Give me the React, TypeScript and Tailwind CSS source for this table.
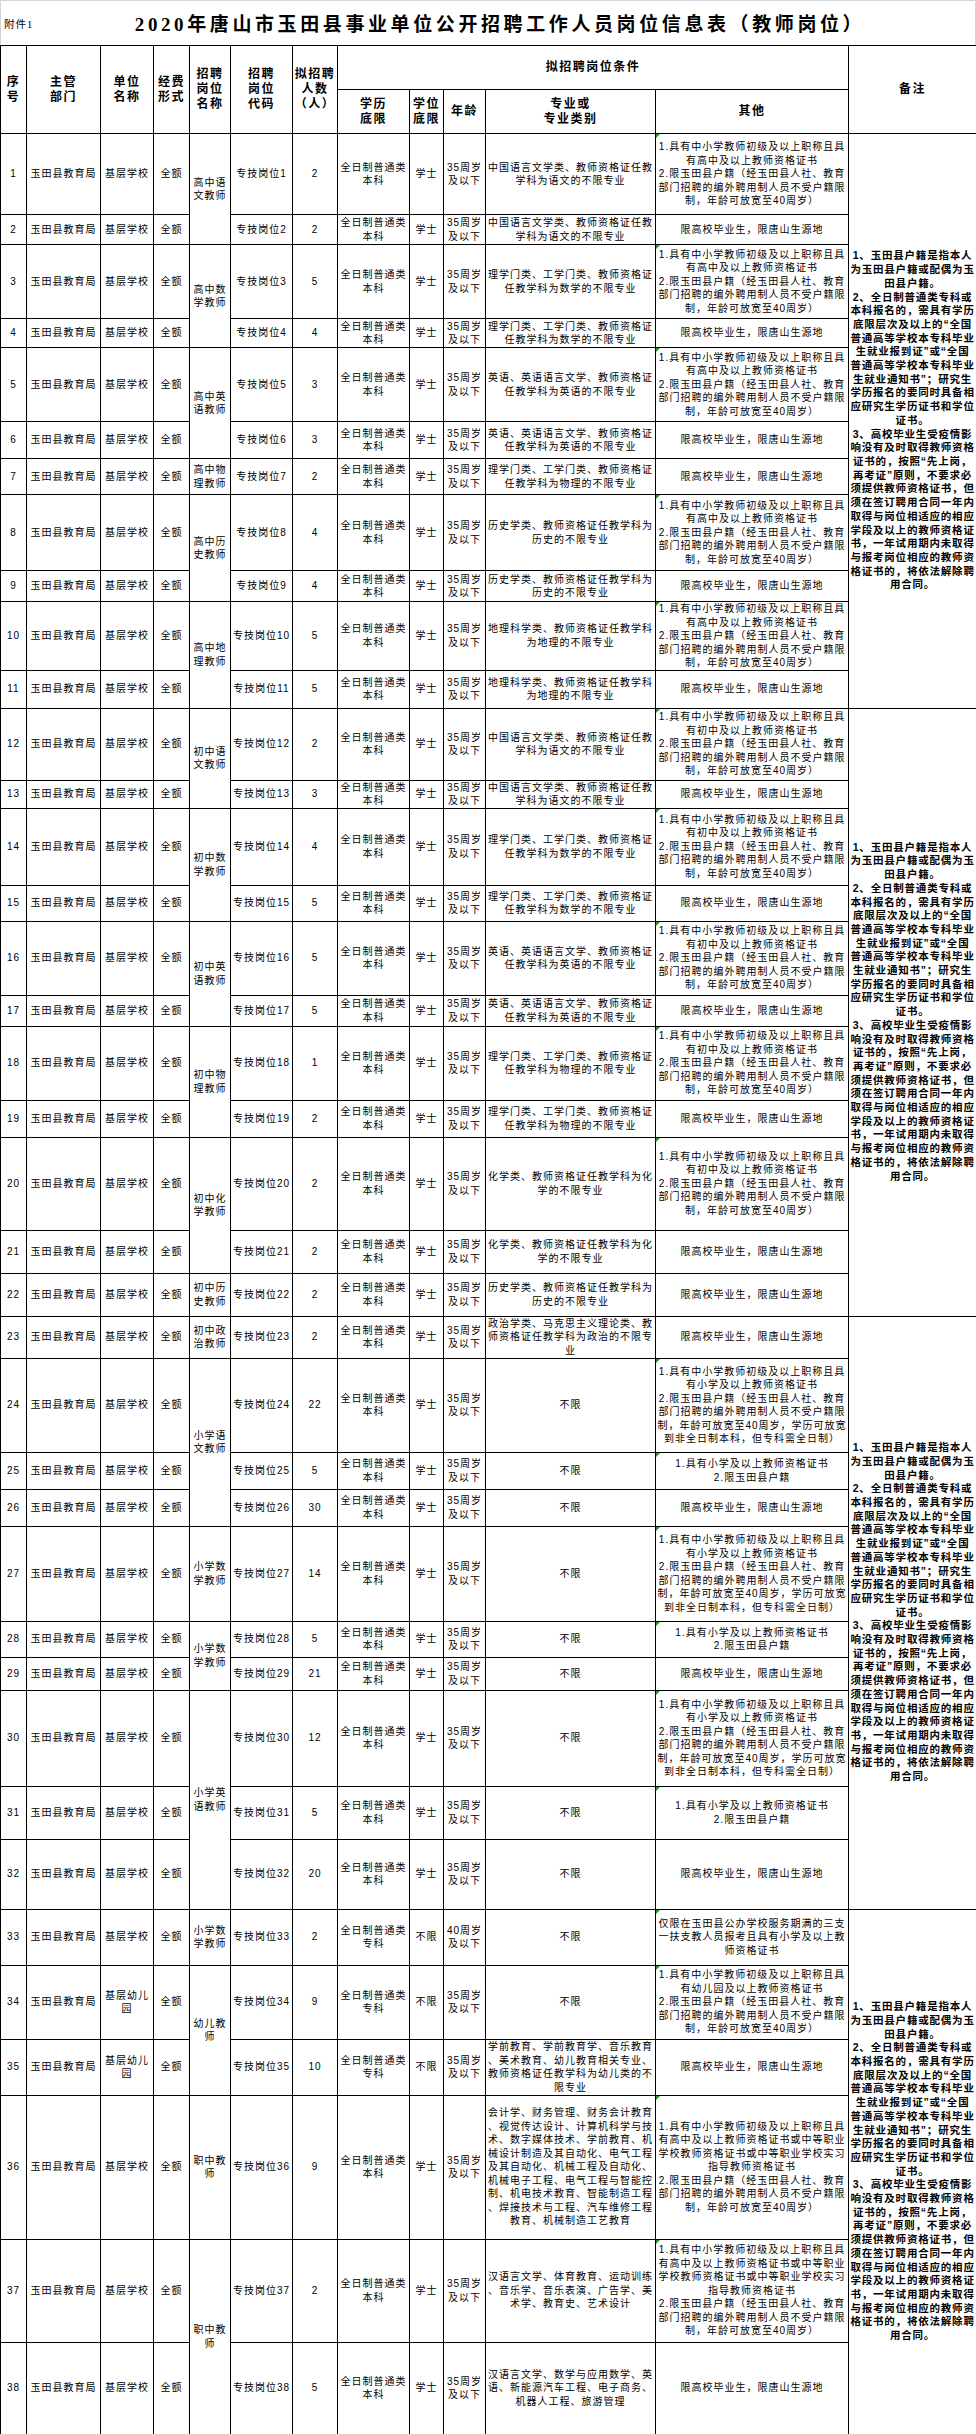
const HEIGHTS = [
  "h-[81px]", "h-[30px]", "h-[74px]", "h-[29px]", "h-[74px]", "h-[37px]", "h-[36px]", "h-[76px]", "h-[31px]", "h-[68px]",
  "h-[38px]", "h-[72px]", "h-[28px]", "h-[77px]", "h-[36px]", "h-[74px]", "h-[31px]", "h-[74px]", "h-[37px]", "h-[93px]",
  "h-[43px]", "h-[43px]", "h-[42px]", "h-[94px]", "h-[37px]", "h-[37px]", "h-[95px]", "h-[36px]", "h-[33px]", "h-[96px]",
  "h-[53px]", "h-[70px]", "h-[56px]", "h-[74px]", "h-[56px]", "h-[144px]", "h-[103px]", "h-[92px]",
];

const hukou = ["2.限玉田县户籍（经玉田县人社、教育", "部门招聘的编外聘用制人员不受户籍限"];
const senior = ["1.具有中小学教师初级及以上职称且具", "有高中及以上教师资格证书", ...hukou, "制，年龄可放宽至40周岁）"];
const junior = ["1.具有中小学教师初级及以上职称且具", "有初中及以上教师资格证书", ...hukou, "制，年龄可放宽至40周岁）"];
const primary = [
  "1.具有中小学教师初级及以上职称且具", "有小学及以上教师资格证书", ...hukou,
  "制，年龄可放宽至40周岁，学历可放宽", "到非全日制本科，但专科需全日制）",
];
const primaryShort = ["1.具有小学及以上教师资格证书", "2.限玉田县户籍"];
const kinder = ["1.具有中小学教师初级及以上职称且具", "有幼儿园及以上教师资格证书", ...hukou, "制，年龄可放宽至40周岁）"];
const vocational = [
  "1.具有中小学教师初级及以上职称且具", "有高中及以上教师资格证书或中等职业", "学校教师资格证书或中等职业学校实习",
  "指导教师资格证书", ...hukou, "制，年龄可放宽至40周岁）",
];
const grad = ["限高校毕业生，限唐山生源地"];
const sanzhi = ["仅限在玉田县公办学校服务期满的三支", "一扶支教人员报考且具有小学及以上教", "师资格证书"];

const chinese = ["中国语言文学类、教师资格证任教", "学科为语文的不限专业"];
const math = ["理学门类、工学门类、教师资格证", "任教学科为数学的不限专业"];
const english = ["英语、英语语言文学、教师资格证", "任教学科为英语的不限专业"];
const physics = ["理学门类、工学门类、教师资格证", "任教学科为物理的不限专业"];
const history = ["历史学类、教师资格证任教学科为", "历史的不限专业"];
const geo = ["地理科学类、教师资格证任教学科", "为地理的不限专业"];
const chem = ["化学类、教师资格证任教学科为化", "学的不限专业"];
const politics = ["政治学类、马克思主义理论类、教", "师资格证任教学科为政治的不限专", "业"];
const none = ["不限"];

type Row = {
  num: string;
  major: string[];
  other: string[];
  unit?: string[];
  edu?: string;
  degree?: string;
  age?: string;
};

const rows: Row[] = [
  { num: "2", major: chinese, other: senior },
  { num: "2", major: chinese, other: grad },
  { num: "5", major: math, other: senior },
  { num: "4", major: math, other: grad },
  { num: "3", major: english, other: senior },
  { num: "3", major: english, other: grad },
  { num: "2", major: physics, other: grad },
  { num: "4", major: history, other: senior },
  { num: "4", major: history, other: grad },
  { num: "5", major: geo, other: senior },
  { num: "5", major: geo, other: grad },
  { num: "2", major: chinese, other: junior },
  { num: "3", major: chinese, other: grad },
  { num: "4", major: math, other: junior },
  { num: "5", major: math, other: grad },
  { num: "5", major: english, other: junior },
  { num: "5", major: english, other: grad },
  { num: "1", major: physics, other: junior },
  { num: "2", major: physics, other: grad },
  { num: "2", major: chem, other: junior },
  { num: "2", major: chem, other: grad },
  { num: "2", major: history, other: grad },
  { num: "2", major: politics, other: grad },
  { num: "22", major: none, other: primary },
  { num: "5", major: none, other: primaryShort },
  { num: "30", major: none, other: grad },
  { num: "14", major: none, other: primary },
  { num: "5", major: none, other: primaryShort },
  { num: "21", major: none, other: grad },
  { num: "12", major: none, other: primary },
  { num: "5", major: none, other: primaryShort },
  { num: "20", major: none, other: grad },
  { num: "2", major: none, other: sanzhi, edu: "专科", degree: "不限", age: "40周岁" },
  { num: "9", major: none, other: kinder, unit: ["基层幼儿", "园"], edu: "专科", degree: "不限" },
  {
    num: "10",
    major: ["学前教育、学前教育学、音乐教育", "、美术教育、幼儿教育相关专业、", "教师资格证任教学科为幼儿类的不", "限专业"],
    other: grad,
    unit: ["基层幼儿", "园"],
    edu: "专科",
    degree: "不限",
  },
  {
    num: "9",
    major: [
      "会计学、财务管理、财务会计教育", "、视觉传达设计、计算机科学与技", "术、数字媒体技术、学前教育、机",
      "械设计制造及其自动化、电气工程", "及其自动化、机械工程及自动化、", "机械电子工程、电气工程与智能控",
      "制、机电技术教育、智能制造工程", "、焊接技术与工程、汽车维修工程", "教育、机械制造工艺教育",
    ],
    other: vocational,
  },
  {
    num: "2",
    major: ["汉语言文学、体育教育、运动训练", "、音乐学、音乐表演、广告学、美", "术学、教育史、艺术设计"],
    other: vocational,
  },
  {
    num: "5",
    major: ["汉语言文学、数学与应用数学、英", "语、新能源汽车工程、电子商务、", "机器人工程、旅游管理"],
    other: grad,
  },
];

// 招聘岗位名称 merged cells: first row -> [rowSpan, lines]
const posts: Record<number, [number, string[]]> = {
  1: [2, ["高中语", "文教师"]],
  3: [2, ["高中数", "学教师"]],
  5: [2, ["高中英", "语教师"]],
  7: [1, ["高中物", "理教师"]],
  8: [2, ["高中历", "史教师"]],
  10: [2, ["高中地", "理教师"]],
  12: [2, ["初中语", "文教师"]],
  14: [2, ["初中数", "学教师"]],
  16: [2, ["初中英", "语教师"]],
  18: [2, ["初中物", "理教师"]],
  20: [2, ["初中化", "学教师"]],
  22: [1, ["初中历", "史教师"]],
  23: [1, ["初中政", "治教师"]],
  24: [3, ["小学语", "文教师"]],
  27: [1, ["小学数", "学教师"]],
  28: [2, ["小学数", "学教师"]],
  30: [3, ["小学英", "语教师"]],
  33: [1, ["小学数", "学教师"]],
  34: [2, ["幼儿教", "师"]],
  36: [1, ["职中教", "师"]],
  37: [2, ["职中教", "师"]],
};

const remarkSpans: Record<number, number> = { 1: 11, 12: 11, 23: 10, 33: 6 };

const remark = [
  "1、玉田县户籍是指本人", "为玉田县户籍或配偶为玉", "田县户籍。",
  "2、全日制普通类专科或", "本科报名的，需具有学历", "底限层次及以上的“全国", "普通高等学校本专科毕业",
  "生就业报到证”或“全国", "普通高等学校本专科毕业", "生就业通知书”；研究生", "学历报名的要同时具备相",
  "应研究生学历证书和学位", "证书。",
  "3、高校毕业生受疫情影", "响没有及时取得教师资格", "证书的，按照“先上岗，", "再考证”原则，不要求必",
  "须提供教师资格证书，但", "须在签订聘用合同一年内", "取得与岗位相适应的相应", "学段及以上的教师资格证",
  "书，一年试用期内未取得", "与报考岗位相应的教师资", "格证书的，将依法解除聘", "用合同。",
];

const cell = "border border-black p-0 text-center align-middle";
const head = "border border-black p-0 text-center align-middle font-bold text-[12px] leading-[15px] tracking-[1.5px]";

function Lines({ lines }: { lines: string[] }) {
  return (
    <>
      {lines.map((l, i) => (
        <div key={i} className="whitespace-nowrap">
          {l}
        </div>
      ))}
    </>
  );
}

export default function App() {
  return (
    <div className="w-[976px] bg-white text-black font-['Liberation_Sans','Noto_Sans_CJK_SC',sans-serif]">
      <div className="flex h-[45px] items-center border-x border-t border-gray-300 pt-[4px]">
        <span className="w-[40px] pl-[3px] text-[10.5px] font-['Liberation_Serif','Noto_Sans_CJK_SC',serif] tracking-[1px]">
          附件1
        </span>
        <h1 className="flex-1 pr-[16px] text-center text-[19px] font-bold tracking-[3.6px] font-['Liberation_Serif','Noto_Sans_CJK_SC',serif]">
          2020年唐山市玉田县事业单位公开招聘工作人员岗位信息表（教师岗位）
        </h1>
      </div>

      <table className="w-[976px] table-fixed border-collapse">
        <colgroup>
          <col className="w-[26px]" />
          <col className="w-[74px]" />
          <col className="w-[53px]" />
          <col className="w-[36px]" />
          <col className="w-[41px]" />
          <col className="w-[62px]" />
          <col className="w-[45px]" />
          <col className="w-[72px]" />
          <col className="w-[34px]" />
          <col className="w-[42px]" />
          <col className="w-[170px]" />
          <col className="w-[193px]" />
          <col className="w-[128px]" />
        </colgroup>
        <thead>
          <tr className="h-[44px]">
            <th rowSpan={2} className={head}><Lines lines={["序", "号"]} /></th>
            <th rowSpan={2} className={head}><Lines lines={["主管", "部门"]} /></th>
            <th rowSpan={2} className={head}><Lines lines={["单位", "名称"]} /></th>
            <th rowSpan={2} className={head}><Lines lines={["经费", "形式"]} /></th>
            <th rowSpan={2} className={head}><Lines lines={["招聘", "岗位", "名称"]} /></th>
            <th rowSpan={2} className={head}><Lines lines={["招聘", "岗位", "代码"]} /></th>
            <th rowSpan={2} className={head}><Lines lines={["拟招聘", "人数", "（人）"]} /></th>
            <th colSpan={5} className={head}>拟招聘岗位条件</th>
            <th rowSpan={2} className={head}>备注</th>
          </tr>
          <tr className="h-[44px]">
            <th className={head}><Lines lines={["学历", "底限"]} /></th>
            <th className={head}><Lines lines={["学位", "底限"]} /></th>
            <th className={head}>年龄</th>
            <th className={head}><Lines lines={["专业或", "专业类别"]} /></th>
            <th className={head}>其他</th>
          </tr>
        </thead>
        <tbody className="text-[10px] leading-[13.5px] tracking-[1px]">
          {rows.map((r, i) => {
            const n = i + 1;
            const post = posts[n];
            const span = remarkSpans[n];
            const marked = r.other !== grad;
            return (
              <tr key={n} className={HEIGHTS[i]}>
                <td className={cell}>{n}</td>
                <td className={cell}>玉田县教育局</td>
                <td className={cell}><Lines lines={r.unit ?? ["基层学校"]} /></td>
                <td className={cell}>全额</td>
                {post && (
                  <td rowSpan={post[0]} className={cell}>
                    <Lines lines={post[1]} />
                  </td>
                )}
                <td className={cell}>专技岗位{n}</td>
                <td className={cell}>{r.num}</td>
                <td className={cell}><Lines lines={["全日制普通类", r.edu ?? "本科"]} /></td>
                <td className={cell}>{r.degree ?? "学士"}</td>
                <td className={cell}><Lines lines={[r.age ?? "35周岁", "及以下"]} /></td>
                <td className={cell}><Lines lines={r.major} /></td>
                <td className={`${cell} relative`}>
                  {marked && (
                    <span className="absolute left-0 top-0 h-0 w-0 border-r-[4px] border-t-[4px] border-r-transparent border-t-[#2f8f2f]" />
                  )}
                  <Lines lines={r.other} />
                </td>
                {span && (
                  <td rowSpan={span} className={`${cell} text-[10.5px] font-bold leading-[13.7px] tracking-[0.8px]`}>
                    <Lines lines={remark} />
                  </td>
                )}
              </tr>
            );
          })}
        </tbody>
      </table>
    </div>
  );
}
